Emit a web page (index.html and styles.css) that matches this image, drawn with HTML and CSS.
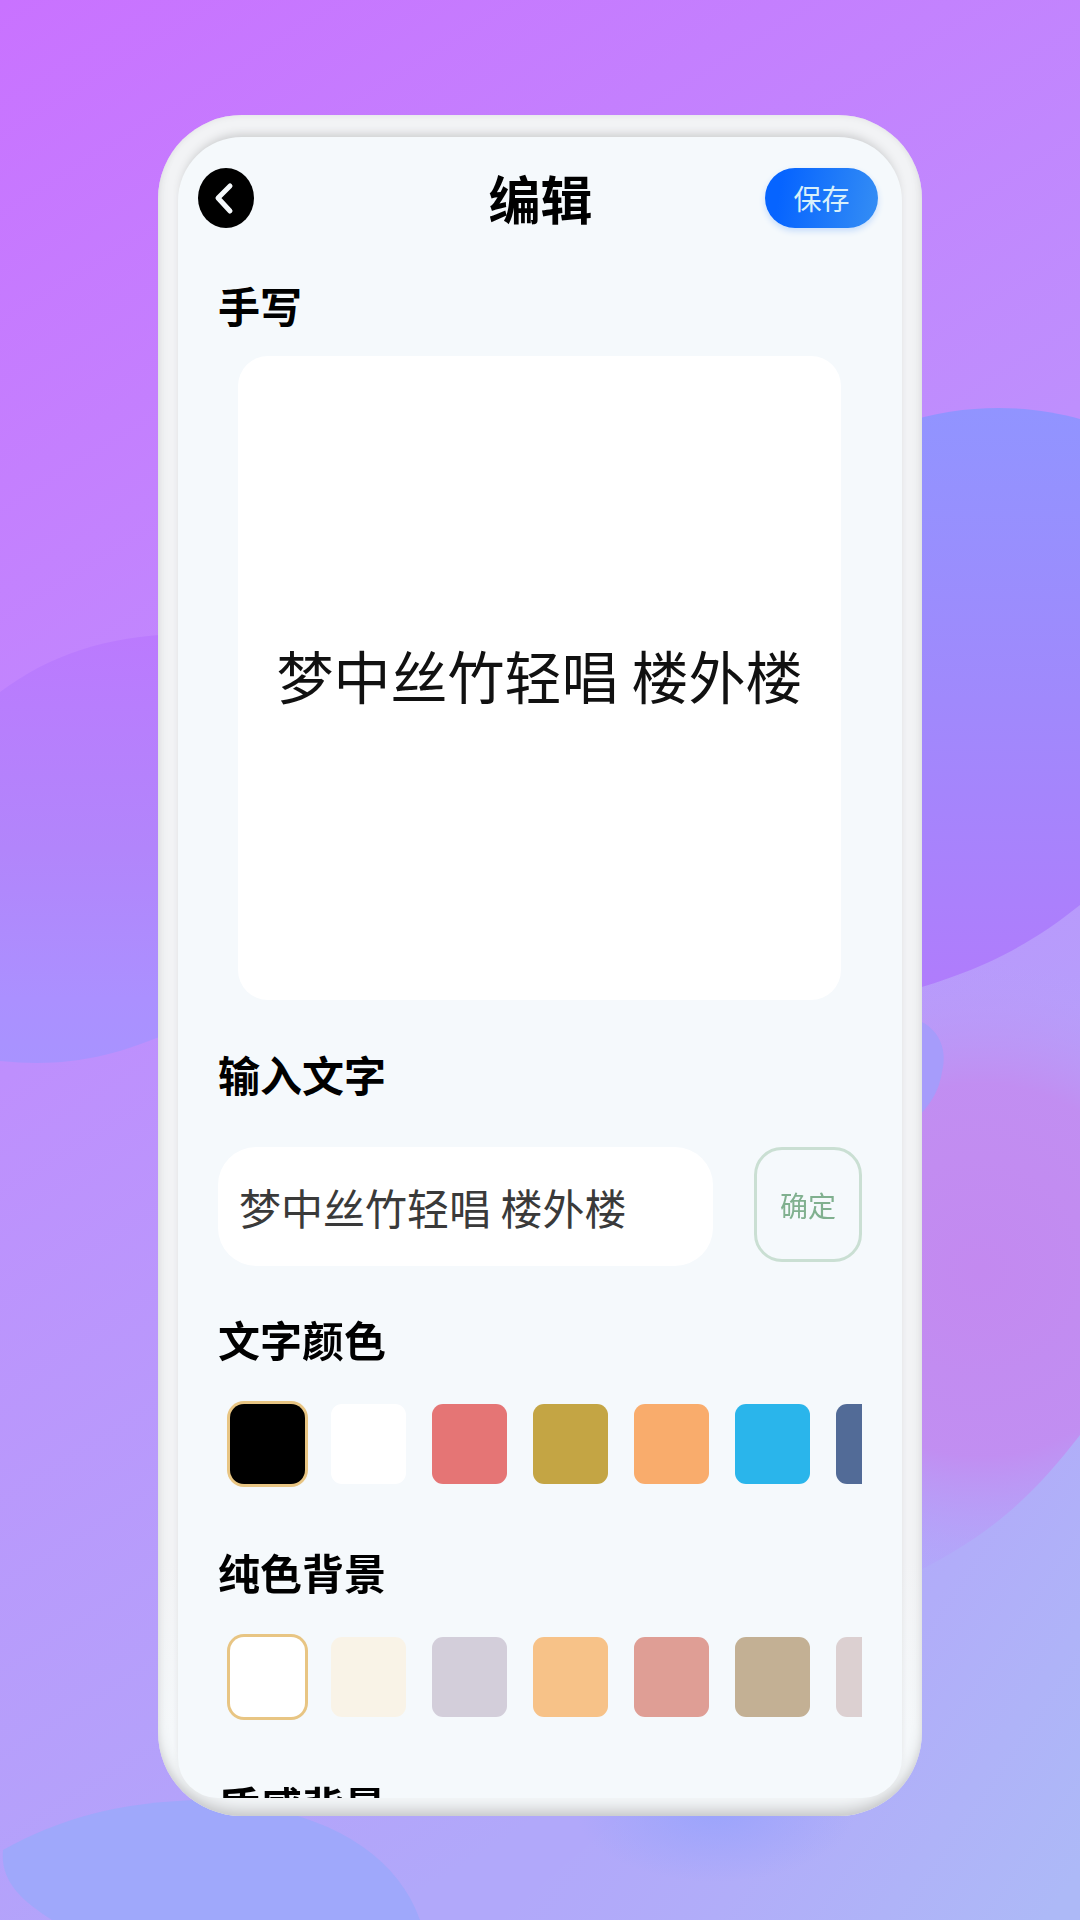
FILE: index.html
```html
<!DOCTYPE html>
<html lang="zh-CN">
<head>
  <meta charset="UTF-8">
  <meta name="viewport" content="width=device-width, initial-scale=1.0">
  <title>编辑</title>
  <link rel="stylesheet" href="styles.css">
</head>
<body>
  <!-- background waves -->
  <svg class="backdrop" viewBox="0 0 1080 1920" preserveAspectRatio="none" aria-hidden="true">
    <defs>
      <linearGradient id="base" x1="0" y1="0" x2="0.35" y2="1">
        <stop offset="0" stop-color="#c972ff"/>
        <stop offset="0.5" stop-color="#be8ffd"/>
        <stop offset="1" stop-color="#b1a8fa"/>
      </linearGradient>
      <linearGradient id="left" x1="0" y1="0" x2="0" y2="1">
        <stop offset="0" stop-color="#bb7afe"/>
        <stop offset="0.5" stop-color="#b285fb"/>
        <stop offset="0.85" stop-color="#ab90ff"/>
        <stop offset="1" stop-color="#a893ff"/>
      </linearGradient>
      <linearGradient id="right" x1="0" y1="0" x2="0" y2="1">
        <stop offset="0" stop-color="#9194ff"/>
        <stop offset="0.5" stop-color="#a089fc"/>
        <stop offset="1" stop-color="#b07cfc"/>
      </linearGradient>
      <radialGradient id="pink" gradientUnits="userSpaceOnUse" cx="980" cy="1270" r="310">
        <stop offset="0" stop-color="#c389f0"/>
        <stop offset="0.6" stop-color="#c28df1" stop-opacity="0.95"/>
        <stop offset="1" stop-color="#b8a0f8" stop-opacity="0"/>
      </radialGradient>
      <linearGradient id="corner" gradientUnits="userSpaceOnUse" x1="680" y1="1640" x2="1060" y2="1900">
        <stop offset="0" stop-color="#b1abf9" stop-opacity="0"/>
        <stop offset="0.4" stop-color="#b1adf9"/>
        <stop offset="1" stop-color="#adb9f7"/>
      </linearGradient>
      <radialGradient id="glow">
        <stop offset="0" stop-color="#9ba4fc"/>
        <stop offset="1" stop-color="#9ba4fc" stop-opacity="0"/>
      </radialGradient>
    </defs>
    <rect width="1080" height="1920" fill="url(#base)"/>
    <path d="M0 692C50 655 105 636 180 634V1028C110 1060 60 1067 0 1061Z" fill="url(#left)"/>
    <rect x="660" y="940" width="420" height="660" fill="url(#pink)"/>
    <path d="M900 1016C940 1020 948 1050 942 1072C938 1095 930 1106 900 1136Z" fill="#a69cfb"/>
    <path d="M900 424C965 402 1030 405 1080 419V905C1030 945 980 972 900 993Z" fill="url(#right)"/>
    <path d="M1080 1435C1030 1500 985 1540 900 1580L500 1920H1080Z" fill="url(#corner)"/>
    <ellipse cx="715" cy="1810" rx="140" ry="72" fill="url(#glow)"/>
    <path d="M3 1850C60 1818 120 1802 200 1800C320 1806 395 1850 420 1920H52C20 1900 0 1880 3 1850Z" fill="#9fa8fb"/>
  </svg>

  <main class="phone">
    <div class="screen">
      <header class="topbar">
        <button class="back-btn" type="button" aria-label="返回">
          <svg viewBox="0 0 56 60"><path d="M32 18L20 30L32 43"/></svg>
        </button>
        <h1>编辑</h1>
        <button class="save-btn" type="button">保存</button>
      </header>

      <section class="block">
        <h2>手写</h2>
        <div class="paper">梦中丝竹轻唱 楼外楼</div>
      </section>

      <section class="block">
        <h2><label for="words">输入文字</label></h2>
        <form class="word-form">
          <input type="text" id="words" value="梦中丝竹轻唱 楼外楼">
          <button class="ok-btn" type="button">确定</button>
        </form>
      </section>

      <section class="block">
        <h2>文字颜色</h2>
        <div class="swatches">
          <button type="button" class="swatch black active" aria-label="黑色"></button>
          <button type="button" class="swatch white" aria-label="白色"></button>
          <button type="button" class="swatch red" aria-label="红色"></button>
          <button type="button" class="swatch olive" aria-label="橄榄色"></button>
          <button type="button" class="swatch orange" aria-label="橙色"></button>
          <button type="button" class="swatch sky" aria-label="天蓝"></button>
          <button type="button" class="swatch navy" aria-label="深蓝"></button>
        </div>
      </section>

      <section class="block">
        <h2>纯色背景</h2>
        <div class="swatches">
          <button type="button" class="swatch white active" aria-label="白色"></button>
          <button type="button" class="swatch cream" aria-label="米色"></button>
          <button type="button" class="swatch lilac" aria-label="淡紫"></button>
          <button type="button" class="swatch apricot" aria-label="杏色"></button>
          <button type="button" class="swatch rose" aria-label="玫瑰"></button>
          <button type="button" class="swatch khaki" aria-label="卡其"></button>
          <button type="button" class="swatch blush" aria-label="浅粉"></button>
        </div>
      </section>

      <section class="block">
        <h2>质感背景</h2>
      </section>
    </div>
  </main>
</body>
</html>
```
FILE: styles.css
```css
* { box-sizing: border-box; }
body { margin: 0; height: 100vh; padding: 115px 158px 104px; display: flex; overflow: hidden; background: #be8ffd; font-family: "Noto Sans CJK SC", sans-serif; color: #000; }
button { border: none; padding: 0; font-family: inherit; cursor: pointer; }

.backdrop { position: fixed; inset: 0; width: 100%; height: 100%; z-index: -1; }

.phone { flex: 1; min-width: 0; display: flex; padding: 22px 20px 18px; border-radius: 84px; background: linear-gradient(#f2f3f5 85%, #f5f8fa 95%); box-shadow: inset 0 -12px 16px -6px #c4c5c7, inset 0 0 6px #dfe0e2; }
.screen { flex: 1; min-width: 0; overflow: hidden; padding: 28px 40px 0; border-radius: 64px 64px 40px 40px; background: #f5f9fc; box-shadow: 0 -6px 8px -3px #cdced0; }

.topbar { display: flex; align-items: center; justify-content: space-between; height: 66px; margin: 0 -16px 44px -20px; }
.topbar h1 { margin: 0; padding-left: 62px; font-size: 52px; line-height: 60px; font-weight: 700; }
.back-btn { width: 56px; height: 60px; border-radius: 50%; background: #000; }
.back-btn svg { display: block; width: 56px; height: 60px; fill: none; stroke: #f5f9fc; stroke-width: 5; stroke-linecap: round; stroke-linejoin: round; }
.save-btn { width: 113px; height: 60px; border-radius: 30px; background: linear-gradient(100deg, #0664ff 15%, #358ef4); color: #d8f0fa; font-size: 28px; box-shadow: 0 3px 6px #c5dcfb; }

.block h2 { margin: 0; font-size: 42px; line-height: 60px; font-weight: 700; }
.paper { display: flex; align-items: center; justify-content: center; height: 644px; margin: 21px 21px 44px 20px; padding-bottom: 8px; border-radius: 30px; background: #fff; color: #111; font-size: 57px; font-weight: 400; }

.word-form { display: flex; justify-content: space-between; margin: 43px 0 43px; }
.word-form input { width: 495px; height: 119px; min-width: 0; padding: 0 21px; border: none; border-radius: 38px; background: #fff; color: #3a3a3a; font-family: inherit; font-size: 42px; }
.ok-btn { width: 108px; height: 115px; border: 3px solid #cadfd3; border-radius: 28px; background: transparent; color: #80b08f; font-size: 28px; }

.swatches { display: flex; gap: 26px; margin: 35px 0 58px; padding: 0 12px; height: 80px; clip-path: inset(-6px 0); }
.swatch { flex: 0 0 75px; height: 80px; border-radius: 11px; }
.swatch.active { border-radius: 14px; box-shadow: 0 0 0 3px #e8c583; }
.black { background: #000; }
.white { background: #fff; }
.red { background: #e57575; }
.olive { background: #c4a544; }
.orange { background: #f9ac6c; }
.sky { background: #2ab5eb; }
.navy { background: #526b97; }
.cream { background: #f9f3e7; }
.lilac { background: #d3ceda; }
.apricot { background: #f7c288; }
.rose { background: #df9e95; }
.khaki { background: #c3b094; }
.blush { background: #dcd0d1; }
```
